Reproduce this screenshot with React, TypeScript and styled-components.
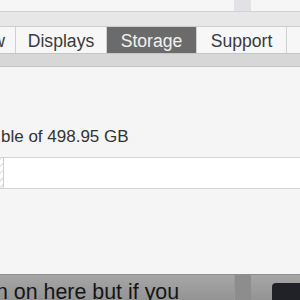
import React from "react";
import styled, { createGlobalStyle } from "styled-components";

const Global = createGlobalStyle`
  html, body { margin: 0; padding: 0; background: #f5f5f5; overflow: hidden; }
  body { font-family: "Liberation Sans", Arial, Helvetica, sans-serif; }
  #root { width: 300px; height: 300px; overflow: hidden; }
`;

const Page = styled.div`
  width: 300px;
  height: 300px;
  display: flex;
  flex-direction: column;
  overflow: hidden;
  background: #f5f5f5;
`;

const TopStrip = styled.div`
  height: 11px;
  background: #f6f6f6;
  display: flex;
  border-bottom: 1px solid #d2d2d2;
  flex-shrink: 0;
`;

const Spacer = styled.div<{ $w: number }>`
  width: ${(p) => p.$w}px;
  flex-shrink: 0;
`;

const ScrollStub = styled.div<{ $bg: string }>`
  width: 17px;
  flex-shrink: 0;
  background: ${(p) => p.$bg};
`;

const Toolbar = styled.div`
  height: 14px;
  background: #e7e7e7;
  flex-shrink: 0;
`;

const TabRow = styled.div`
  height: 26px;
  display: flex;
  background: #f7f7f7;
  border-top: 1px solid #cdcdcd;
  border-bottom: 1px solid #c6c6c6;
  flex-shrink: 0;
`;

const Tab = styled.div<{ $w: number; $active?: boolean; $align?: string }>`
  width: ${(p) => p.$w}px;
  min-width: ${(p) => p.$w}px;
  flex-shrink: 0;
  display: flex;
  align-items: center;
  justify-content: ${(p) => p.$align ?? "center"};
  overflow: hidden;
  box-sizing: border-box;
  border-right: 1px solid #d0d0d0;
  background: ${(p) => (p.$active ? "#6b6b6b" : "#f7f7f7")};
  color: ${(p) => (p.$active ? "#f2f2f2" : "#3a3a3a")};
  font-size: 17.6px;
  white-space: nowrap;
  padding-top: 2px;
`;

const TabText = styled.span<{ $right?: number }>`
  margin-right: ${(p) => p.$right ?? 0}px;
  flex-shrink: 0;
`;

const SubBand = styled.div`
  height: 12px;
  background: #d7d7d7;
  border-bottom: 1px solid #c3c3c3;
  flex-shrink: 0;
`;

const Content = styled.div`
  flex: 1;
  background: #f5f5f5;
  display: flex;
  flex-direction: column;
  padding-top: 60px;
  overflow: hidden;
`;

const Usage = styled.div`
  font-size: 17px;
  color: #333;
  line-height: 20px;
  padding-left: 1px;
  white-space: nowrap;
`;

const Bar = styled.div`
  margin-top: 10px;
  height: 32px;
  width: 310px;
  flex-shrink: 0;
  display: flex;
  background: #ffffff;
  border: 1px solid #d3d3d3;
  border-left: none;
  box-sizing: border-box;
`;

const Hatch = styled.div`
  width: 3px;
  border-right: 1px solid #cfcfcf;
  background: repeating-linear-gradient(
    135deg,
    #e8e8e8 0 2px,
    #ffffff 2px 5px
  );
`;

const Bottom = styled.div`
  height: 25px;
  flex-shrink: 0;
  display: flex;
  background: linear-gradient(#a6a6a6, #949494);
  border-top: 1px solid #8e8e8e;
  overflow: hidden;
`;

const BottomText = styled.div`
  width: 234px;
  flex-shrink: 0;
  font-size: 21.4px;
  line-height: 24px;
  color: #151515;
  white-space: nowrap;
  overflow: hidden;
  padding-top: 5px;
  text-indent: -4px;
`;

const DarkStrip = styled.div`
  width: 17px;
  flex-shrink: 0;
  background: #8d8d8d;
  border-left: 1px solid #9a9a9a;
  box-sizing: border-box;
`;

const DarkBox = styled.div`
  margin-left: 21px;
  margin-top: 8px;
  flex: 1;
  background: #202228;
  border-top-left-radius: 4px;
`;

export default function App() {
  return (
    <>
      <Global />
      <Page>
        <TopStrip>
          <Spacer $w={234} />
          <ScrollStub $bg="#e1e1e6" />
        </TopStrip>
        <Toolbar />
        <TabRow>
          <Tab $w={16} $align="flex-end">
            <TabText $right={10}>Overview</TabText>
          </Tab>
          <Tab $w={91}>
            <TabText>Displays</TabText>
          </Tab>
          <Tab $w={90} $active>
            <TabText>Storage</TabText>
          </Tab>
          <Tab $w={90}>
            <TabText>Support</TabText>
          </Tab>
        </TabRow>
        <SubBand />
        <Content>
          <Usage>ble of 498.95 GB</Usage>
          <Bar>
            <Hatch />
          </Bar>
        </Content>
        <Bottom>
          <BottomText>n on here but if you</BottomText>
          <DarkStrip />
          <DarkBox />
        </Bottom>
      </Page>
    </>
  );
}
